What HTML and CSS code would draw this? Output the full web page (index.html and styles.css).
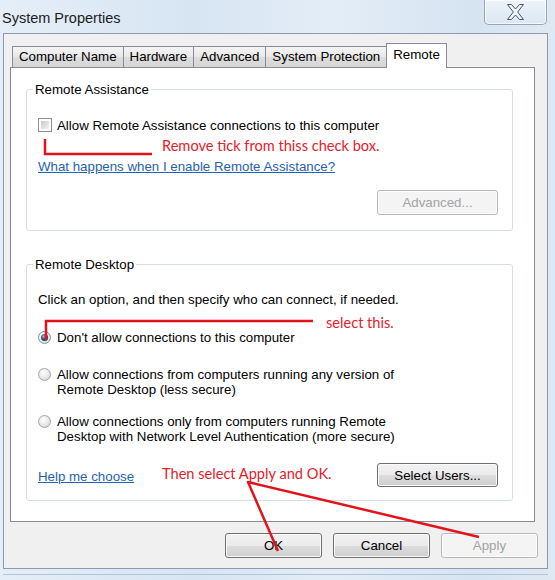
FILE: index.html
```html
<!DOCTYPE html>
<html lang="en">
<head>
<meta charset="utf-8">
<title>System Properties</title>
<link rel="stylesheet" href="styles.css">
</head>
<body>
<div class="window">
  <div class="titlebar">
    <div class="title">System Properties</div>
    <div class="close">
      <svg width="19" height="16" viewBox="0 0 19 16">
        <polygon points="1.5,0.5 5.5,0.5 9.5,5 13.5,0.5 17.5,0.5 11.7,8 17.5,15.5 13.5,15.5 9.5,11 5.5,15.5 1.5,15.5 7.3,8" fill="#eef3f8" stroke="#46566a" stroke-width="1" stroke-linejoin="round"/>
      </svg>
    </div>
  </div>
  <div class="client">
    <div class="tabs">
      <div class="tab first">Computer Name</div>
      <div class="tab">Hardware</div>
      <div class="tab">Advanced</div>
      <div class="tab">System Protection</div>
      <div class="tab active">Remote</div>
    </div>
    <div class="panel">
      <fieldset class="group">
        <legend>Remote Assistance</legend>
        <div class="gbody gbody-a">
          <div class="check"><span class="cb"></span><span>Allow Remote Assistance connections to this computer</span></div>
          <a class="link link-a" href="#">What happens when I enable Remote Assistance?</a>
          <div class="btnrow"><button class="btn wide disabled">Advanced...</button></div>
        </div>
      </fieldset>
      <fieldset class="group group-d">
        <legend>Remote Desktop</legend>
        <div class="gbody gbody-d">
          <div class="intro">Click an option, and then specify who can connect, if needed.</div>
          <div class="opt opt1"><span class="radio on"></span><span>Don't allow connections to this computer</span></div>
          <div class="opt opt2"><span class="radio"></span><span>Allow connections from computers running any version of<br>Remote Desktop (less secure)</span></div>
          <div class="opt opt3"><span class="radio"></span><span>Allow connections only from computers running Remote<br>Desktop with Network Level Authentication (more secure)</span></div>
          <div class="bottomrow">
            <a class="link link-h" href="#">Help me choose</a>
            <button class="btn wide short">Select Users...</button>
          </div>
        </div>
      </fieldset>
    </div>
    <div class="footer">
      <button class="btn std">OK</button>
      <button class="btn std">Cancel</button>
      <button class="btn std disabled">Apply</button>
    </div>
  </div>
  <div class="frame-bottom"></div>

  <svg class="marks" width="555" height="580" viewBox="0 0 555 580">
    <polyline points="45,139 45,154 152,154" fill="none" stroke="#e3131c" stroke-width="2.5"/>
    <polyline points="46,340 46,321 313,321" fill="none" stroke="#e3131c" stroke-width="2.5"/>
    <polyline points="278,551 248,482 479,537" fill="none" stroke="#e3131c" stroke-width="2.5" stroke-linejoin="round"/>
  </svg>
  <div class="note note1">Remove tick from thiss check box.</div>
  <div class="note note2">select this.</div>
  <div class="note note3">Then select Apply and OK.</div>
</div>
</body>
</html>
```

FILE: styles.css
```css
* {
  box-sizing: border-box;
}

body {
  margin: 0;
  font-family: "Liberation Sans", Arial, sans-serif;
  font-size: 13.3px;
  color: #000;
}

.window {
  position: relative;
  width: 555px;
  height: 580px;
  overflow: hidden;
  background: linear-gradient(90deg, #e4eef8 0%, #d7e5f2 35%, #e3edf7 60%, #d6e4f1 85%, #dfe9f4 100%);
}

.titlebar {
  height: 33px;
  display: flex;
  justify-content: space-between;
  align-items: flex-start;
}

.title {
  padding: 9px 0 0 2px;
  font-size: 14.5px;
  line-height: 18px;
  color: #1c1c1c;
}

.close {
  width: 63px;
  height: 25px;
  margin-right: 8px;
  border: 1px solid #93a6ba;
  border-top: none;
  border-radius: 0 0 5px 5px;
  background: linear-gradient(#edf3f9, #dbe7f3);
  box-shadow: inset 0 0 0 1px rgba(255, 255, 255, 0.7);
  display: flex;
  align-items: center;
  justify-content: center;
}

.client {
  margin-left: 3px;
  width: 545px;
  height: 536px;
  border: 1px solid #8c9aab;
  background: #f0f0f0;
  padding: 0 0 0 6px;
}

.tabs {
  margin: 9px 0 0 2px;
  height: 24px;
  display: flex;
  align-items: flex-end;
}

.tab {
  height: 21px;
  padding: 0 6px;
  margin-left: -1px;
  border: 1px solid #898c95;
  border-bottom: none;
  line-height: 20px;
  white-space: nowrap;
  background: linear-gradient(#f4f4f4, #e8e8e8 50%, #dddddd 51%, #d6d6d6);
}

.tab.first {
  margin-left: 0;
}

.tab.active {
  position: relative;
  z-index: 1;
  height: 25px;
  margin-bottom: -1px;
  line-height: 22px;
  background: #fff;
}

.panel {
  width: 525px;
  height: 455px;
  border: 1px solid #898c95;
  background: #fff;
  padding: 14px 21px 0 15px;
}

.group {
  margin: 0;
  padding: 0;
  min-width: 0;
  border: 1px solid #d5dfe5;
  border-radius: 3px;
}

.group legend {
  margin-left: 6px;
  padding: 0 2px;
  line-height: 15px;
}

.group-d {
  margin-top: 26px;
}

.gbody-a {
  padding: 20px 14px 15px 11px;
}

.check {
  display: flex;
  align-items: center;
  gap: 5px;
  height: 16px;
}

.cb {
  position: relative;
  width: 14px;
  height: 14px;
  border: 1px solid #8e8f8f;
  background: #fff;
}

.cb::after {
  content: "";
  position: absolute;
  left: 2px;
  top: 2px;
  right: 2px;
  bottom: 2px;
  background: linear-gradient(135deg, #c8c8c8, #f4f4f4);
}

.link {
  display: block;
  width: fit-content;
  line-height: 16px;
  color: #1f62b0;
  text-decoration: underline;
}

.link-a {
  margin-top: 26px;
}

.btnrow {
  margin-top: 15px;
  display: flex;
  justify-content: flex-end;
}

.btn {
  height: 25px;
  padding: 0;
  font-family: "Liberation Sans", Arial, sans-serif;
  font-size: 13.3px;
  color: #000;
  border: 1px solid #707070;
  border-radius: 3px;
  background: linear-gradient(#f2f2f2 0%, #ebebeb 50%, #dddddd 51%, #cfcfcf 100%);
  box-shadow: inset 0 0 0 1px #fbfbfb;
}

.btn.wide {
  width: 121px;
}

.btn.short {
  height: 24px;
}

.btn.std {
  width: 97px;
}

.btn.disabled {
  color: #a3a3a3;
  border-color: #b5b9bc;
  background: #f4f4f4;
  box-shadow: inset 0 0 0 1px #fcfcfc;
}

.gbody-d {
  padding: 20px 14px 13px 11px;
  line-height: 15px;
}

.opt {
  display: flex;
  align-items: flex-start;
  gap: 6px;
}

.opt1 {
  margin-top: 23px;
}

.opt2 {
  margin-top: 22px;
}

.opt3 {
  margin-top: 17px;
}

.radio {
  position: relative;
  flex: none;
  width: 13px;
  height: 13px;
  margin-top: 1px;
  border: 1px solid #a4a4a4;
  border-radius: 50%;
  background: radial-gradient(circle at 40% 35%, #ffffff 0%, #e6e6e6 55%, #cdcdcd 100%);
}

.radio.on {
  border-color: #7f93a8;
  background: radial-gradient(circle at 40% 35%, #ffffff 0%, #dfe8f1 60%, #b9cadb 100%);
}

.radio.on::after {
  content: "";
  position: absolute;
  left: 2px;
  top: 2px;
  width: 7px;
  height: 7px;
  border-radius: 50%;
  background: radial-gradient(circle at 40% 35%, #9cc0e0 0%, #2b5278 45%, #10263c 100%);
}

.bottomrow {
  margin-top: 19px;
  display: flex;
  justify-content: space-between;
  align-items: center;
}

.link-h {
  margin-top: 4px;
}

.footer {
  padding: 11px 9px 0 0;
  display: flex;
  justify-content: flex-end;
  gap: 11px;
}

.frame-bottom {
  margin: 3px 0 0 3px;
  width: 545px;
  height: 3px;
  border-bottom: 1px solid #b6c3d1;
}

.marks {
  position: absolute;
  left: 0;
  top: 0;
  pointer-events: none;
}

.note {
  position: absolute;
  font-family: Lato, "Open Sans", sans-serif;
  font-size: 14.6px;
  line-height: 18px;
  color: #e3212b;
  white-space: nowrap;
}

.note1 {
  left: 162px;
  top: 137px;
}

.note2 {
  left: 326px;
  top: 314px;
}

.note3 {
  left: 162px;
  top: 465px;
}
```
